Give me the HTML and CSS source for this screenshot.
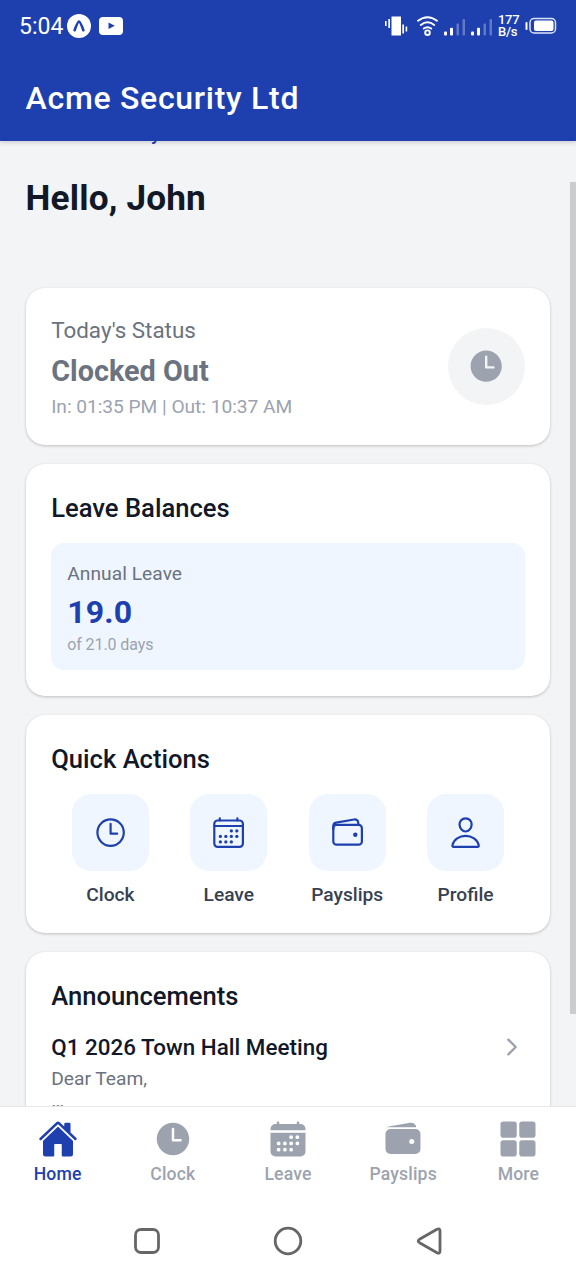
FILE: index.html
```html
<!DOCTYPE html>
<html lang="en">
<head>
<meta charset="utf-8">
<title>Acme Security Ltd</title>
<link rel="stylesheet" href="styles.css">
</head>
<body>
<svg class="defs" aria-hidden="true">
  <symbol id="time-outline" viewBox="0 0 512 512"><path class="line" d="M256 64C150 64 64 150 64 256s86 192 192 192 192-86 192-192S362 64 256 64z"/><path class="line" d="M256 128v144h96"/></symbol>
  <symbol id="time" viewBox="0 0 512 512"><path d="M256 48C141.13 48 48 141.13 48 256s93.13 208 208 208 208-93.13 208-208S370.87 48 256 48zm96 240h-96a16 16 0 01-16-16V128a16 16 0 0132 0v128h80a16 16 0 010 32z"/></symbol>
  <symbol id="calendar-outline" viewBox="0 0 512 512"><rect class="line" x="48" y="80" width="416" height="384" rx="48"/><path class="line" d="M128 48v32M384 48v32M464 160H48"/><circle cx="296" cy="232" r="24"/><circle cx="376" cy="232" r="24"/><circle cx="136" cy="312" r="24"/><circle cx="216" cy="312" r="24"/><circle cx="296" cy="312" r="24"/><circle cx="376" cy="312" r="24"/><circle cx="136" cy="392" r="24"/><circle cx="216" cy="392" r="24"/><circle cx="296" cy="392" r="24"/></symbol>
  <symbol id="calendar" viewBox="0 0 512 512"><path d="M480 128a64 64 0 00-64-64h-16V48.45c0-8.61-6.62-16-15.23-16.43A16 16 0 00368 48v16H144V48.45c0-8.61-6.62-16-15.23-16.43A16 16 0 00112 48v16H96a64 64 0 00-64 64v12a4 4 0 004 4h440a4 4 0 004-4zM32 416a64 64 0 0064 64h320a64 64 0 0064-64V179a3 3 0 00-3-3H35a3 3 0 00-3 3z"/><g fill="#fff"><circle cx="296" cy="232" r="24"/><circle cx="376" cy="232" r="24"/><circle cx="136" cy="312" r="24"/><circle cx="216" cy="312" r="24"/><circle cx="296" cy="312" r="24"/><circle cx="376" cy="312" r="24"/><circle cx="136" cy="392" r="24"/><circle cx="216" cy="392" r="24"/><circle cx="296" cy="392" r="24"/></g></symbol>
  <symbol id="wallet-outline" viewBox="0 0 512 512"><rect class="line" x="48" y="144" width="416" height="288" rx="48"/><path class="line" d="M411.36 144v-30A50 50 0 00352 64.9L88.64 109.85A50 50 0 0048 159v49"/><circle cx="368" cy="288" r="32"/></symbol>
  <symbol id="wallet" viewBox="0 0 512 512"><path d="M95.5 104h320a87.73 87.73 0 0111.18.71 66 66 0 00-77.51-55.56L86 94.08h-.3a66 66 0 00-41.07 26.13A87.57 87.57 0 0195.5 104zM415.5 128h-320a64.07 64.07 0 00-64 64v192a64.07 64.07 0 0064 64h320a64.07 64.07 0 0064-64V192a64.07 64.07 0 00-64-64zM368 320a32 32 0 1132-32 32 32 0 01-32 32z"/></symbol>
  <symbol id="person-outline" viewBox="0 0 512 512"><path class="line" d="M344 144c-3.92 52.87-44 96-88 96s-84.15-43.12-88-96c-4-55 35-96 88-96s92 42 88 96z"/><path class="line" d="M256 304c-87 0-175.3 48-191.64 138.6C62.39 453.52 68.57 464 80 464h352c11.44 0 17.62-10.48 15.65-21.4C431.3 352 343 304 256 304z"/></symbol>
  <symbol id="home" viewBox="0 0 512 512"><path d="M261.56 101.28a8 8 0 00-11.06 0L66.4 277.15a8 8 0 00-2.47 5.79L63.9 448a32 32 0 0032 32H192a16 16 0 0016-16V328a8 8 0 018-8h80a8 8 0 018 8v136a16 16 0 0016 16h96.06a32 32 0 0032-32V282.94a8 8 0 00-2.47-5.79z"/><path d="M490.91 244.15l-74.8-71.56V64a16 16 0 00-16-16h-48a16 16 0 00-16 16v32l-57.92-55.38C272.77 35.14 264.71 32 256 32c-8.68 0-16.72 3.14-22.14 8.63l-212.7 203.5c-6.22 6-7 15.87-1.34 22.37A16 16 0 0043 267.56L250.5 69.28a8 8 0 0111.06 0l207.52 198.28a16 16 0 0022.59-.44c6.14-6.36 5.63-16.86-.76-22.97z"/></symbol>
  <symbol id="grid" viewBox="0 0 512 512"><rect x="32" y="32" width="208" height="208" rx="36"/><rect x="272" y="32" width="208" height="208" rx="36"/><rect x="32" y="272" width="208" height="208" rx="36"/><rect x="272" y="272" width="208" height="208" rx="36"/></symbol>
</svg>

<header class="header">
  <div class="status-bar">
    <div class="status-left">
      <span class="time">5:04</span>
      <svg width="24" height="24" viewBox="0 0 24 24"><circle cx="12" cy="12" r="12" fill="#fff"/><path d="M7.6 16.2Q10.800 7.500 12 7.500T16.400 16.200" fill="none" stroke="#1e40af" stroke-width="2.600" stroke-linecap="round" stroke-linejoin="round"/></svg>
      <svg class="video" width="24" height="18" viewBox="0 0 24 18"><rect width="24" height="18" rx="4" fill="#fff"/><path d="M9.500 5.500l6.300 3.300-6.300 3.300z" fill="#1e40af"/></svg>
    </div>
    <svg class="status-icons" width="112" height="24" viewBox="0 0 112 24" fill="#fff">
      <rect x="6.500" y="2.500" width="9.500" height="19"/><rect x="3.300" y="5" width="1.700" height="9"/><rect x="0" y="7" width="1.600" height="5"/><rect x="17.300" y="10.500" width="1.700" height="9"/><rect x="20.600" y="12.500" width="1.600" height="5"/>
      <g fill="none" stroke="#fff" stroke-width="1.900" stroke-linecap="round"><path d="M33 6.800q9.500-7.200 19 0M35.800 11q6.700-5.400 13.400 0M38.800 14.600q3.700-2.800 7.400 0"/><circle cx="42.500" cy="18.700" r="2.300"/></g>
      <rect x="59" y="17.500" width="3" height="4" rx="1"/><rect x="65" y="13.800" width="3" height="7.700" rx="1"/>
      <rect x="86" y="17.500" width="3" height="4" rx="1"/><rect x="92" y="13.800" width="3" height="7.700" rx="1"/>
      <g fill="#6378c7"><rect x="71.500" y="9.500" width="2.500" height="12" rx="1"/><rect x="77.500" y="5" width="2.500" height="16.500" rx="1"/><rect x="98.500" y="9.500" width="2.500" height="12" rx="1"/><rect x="104.500" y="5" width="2.500" height="16.500" rx="1"/></g>
    </svg>
    <div class="speed"><span>177</span><span>B/s</span></div>
    <svg width="32" height="18" viewBox="0 0 32 18"><path d="M1.500 6v6" stroke="#fff" stroke-width="2" stroke-linecap="round"/><rect x="5" y="1.500" width="25.500" height="14.500" rx="4" fill="none" stroke="#dbe2f8" stroke-width="1.500"/><rect x="9" y="3.500" width="19.500" height="10.500" rx="2" fill="#fff"/></svg>
  </div>
  <h1 class="title">Acme Security Ltd</h1>
</header>

<main class="content">
  <p class="company">Acme Security Ltd</p>
  <h2 class="greeting">Hello, John</h2>

  <section class="card status-card">
    <div>
      <p class="status-label">Today's Status</p>
      <p class="status-value">Clocked Out</p>
      <p class="status-times">In: 01:35 PM | Out: 10:37 AM</p>
    </div>
    <div class="status-badge"><svg class="icon-24"><use href="#time"/></svg></div>
  </section>

  <section class="card balances">
    <h3 class="card-title">Leave Balances</h3>
    <div class="balance">
      <p class="balance-name">Annual Leave</p>
      <p class="balance-value">19.0</p>
      <p class="balance-total">of 21.0 days</p>
    </div>
  </section>

  <section class="card quick">
    <h3 class="card-title">Quick Actions</h3>
    <div class="actions">
      <div class="action"><div class="tile"><svg class="icon-22"><use href="#time-outline"/></svg></div><span>Clock</span></div>
      <div class="action"><div class="tile"><svg class="icon-22"><use href="#calendar-outline"/></svg></div><span>Leave</span></div>
      <div class="action"><div class="tile"><svg class="icon-22"><use href="#wallet-outline"/></svg></div><span>Payslips</span></div>
      <div class="action"><div class="tile"><svg class="icon-22"><use href="#person-outline"/></svg></div><span>Profile</span></div>
    </div>
  </section>

  <section class="card news">
    <h3 class="card-title">Announcements</h3>
    <div class="news-item">
      <div>
        <p class="news-title">Q1 2026 Town Hall Meeting</p>
        <p class="news-body">Dear Team,<br>…</p>
      </div>
      <svg class="chevron" width="26" height="26" viewBox="0 0 512 512"><path d="M184 112l144 144-144 144"/></svg>
    </div>
  </section>
  <div class="scrollbar"></div>
</main>

<nav class="tabs">
  <div class="tab active"><svg class="icon-25"><use href="#home"/></svg><span>Home</span></div>
  <div class="tab"><svg class="icon-25"><use href="#time"/></svg><span>Clock</span></div>
  <div class="tab"><svg class="icon-25"><use href="#calendar"/></svg><span>Leave</span></div>
  <div class="tab"><svg class="icon-25"><use href="#wallet"/></svg><span>Payslips</span></div>
  <div class="tab"><svg class="icon-25"><use href="#grid"/></svg><span>More</span></div>
</nav>
<div class="system-nav">
  <svg width="32" height="32" viewBox="0 0 32 32"><rect x="4.500" y="4.500" width="23" height="23" rx="5.500"/></svg>
  <svg width="32" height="32" viewBox="0 0 32 32"><circle cx="16" cy="16" r="12.800"/></svg>
  <svg width="32" height="32" viewBox="-1 0 32 32"><path d="M5.500 14.300L23 4.300q3-1.300 3 1.700v20q0 3-3 1.700L5.500 17.700q-2.500-1.700 0-3.400z"/></svg>
</div>
</body>
</html>
```
FILE: styles.css
```css
* { box-sizing: border-box; }
body {
  margin: 0;
  width: 576px;
  height: 1280px;
  overflow: hidden;
  display: flex;
  flex-direction: column;
  background: #fff;
  font-family: Roboto, sans-serif;
  color: #111827;
}
h1, h2, h3, p { margin: 0; }
.defs { position: absolute; width: 0; height: 0; }
svg { display: block; flex: none; fill: currentColor; }
.line { fill: none; stroke: currentColor; stroke-width: 32; stroke-linecap: round; stroke-linejoin: round; }

.header {
  flex: none;
  height: 141px;
  background: #1e40af;
  color: #fff;
  z-index: 1;
  box-shadow: 0 1px 5px rgba(0, 0, 0, .2);
}
.status-bar { display: flex; align-items: center; height: 52px; padding: 0 19px 0 19px; }
.status-left { display: flex; align-items: center; gap: 4px; margin-right: auto; }
.time { font-size: 23px; line-height: 28px; padding-top: 2px; }
.video { margin-left: 4px; }
.status-icons { margin-right: 1px; }
.speed { display: flex; flex-direction: column; width: 23px; margin-right: 4px; font-size: 13px; line-height: 12.500px; font-weight: 500; letter-spacing: -.3px; }
.title { padding-left: 25.600px; font-size: 32px; line-height: 38px; margin-top: 27px; font-weight: 500; letter-spacing: .7px; }

.content {
  position: relative;
  flex: 1;
  min-height: 0;
  overflow: hidden;
  padding: 0 25.600px;
  background: #f3f4f6;
  display: flex;
  flex-direction: column;
}
.company { flex: none; height: 24px; margin-top: -19px; color: #1e40af; font-size: 19.200px; line-height: 24px; font-weight: 500; letter-spacing: .85px; }
.greeting { flex: none; margin: 31px 0 69px; font-size: 35.200px; line-height: 42px; font-weight: 700; letter-spacing: .15px; }
.card {
  flex: none;
  margin-bottom: 19px;
  padding: 0 25.600px;
  border-radius: 19.200px;
  background: #fff;
  box-shadow: 0 1px 3px rgba(0, 0, 0, .22);
}
.card-title { font-size: 25.600px; line-height: 30px; font-weight: 500; }
.status-card { display: flex; justify-content: space-between; align-items: center; height: 157px; }
.status-label { padding-top: 4px; font-size: 22.400px; line-height: 27px; color: #6b7280; }
.status-value { margin: 9px 0 5px; font-size: 28.800px; line-height: 36px; font-weight: 700; color: #6b7280; }
.status-times { font-size: 19.200px; line-height: 26px; color: #9ca3af; letter-spacing: -.04px; }
.status-badge { display: flex; align-items: center; justify-content: center; width: 76.800px; height: 76.800px; border-radius: 50%; background: #f3f4f6; color: #9ca3af; }
.icon-22 { width: 35.200px; height: 35.200px; }
.icon-24 { width: 38.400px; height: 38.400px; }
.icon-25 { width: 40px; height: 40px; }

.balances { height: 232px; padding-top: 29px; }
.balance { height: 127px; margin-top: 20px; padding: 19px 16px; border-radius: 12.800px; background: #eff6ff; }
.balance-name { font-size: 19.200px; line-height: 24px; color: #6b7280; letter-spacing: .05px; }
.balance-value { margin: 7px 0 4px; font-size: 32px; line-height: 38px; font-weight: 700; color: #1e40af; letter-spacing: .15px; }
.balance-total { font-size: 16px; line-height: 20px; color: #9ca3af; letter-spacing: -.08px; }

.quick { height: 218px; padding-top: 29px; }
.actions { display: flex; margin-top: 20px; }
.action { flex: 1; display: flex; flex-direction: column; align-items: center; gap: 12px; font-size: 19.200px; line-height: 24px; font-weight: 500; color: #374151; }
.tile { display: flex; align-items: center; justify-content: center; width: 76.800px; height: 76.800px; border-radius: 19.200px; background: #eff6ff; color: #1e40af; }

.news { height: 260px; padding-top: 29px; }
.news-item { display: flex; justify-content: space-between; align-items: center; margin-top: 22px; }
.news-title { font-size: 22.400px; line-height: 28px; font-weight: 500; letter-spacing: .03px; }
.news-body { margin-top: 7px; font-size: 19.200px; line-height: 22px; color: #6b7280; }
.chevron { align-self: flex-start; margin-top: .5px; }
.chevron path { fill: none; stroke: #9ca3af; stroke-width: 48; stroke-linecap: round; stroke-linejoin: round; }
.scrollbar { position: absolute; right: 0; top: 41px; width: 6px; height: 832px; background: #cbccce; }

.tabs { flex: none; display: flex; height: 96px; padding-top: 11.500px; border-top: 1px solid #e5e7eb; background: #fff; z-index: 1; }
.tab { flex: 1; display: flex; flex-direction: column; align-items: center; gap: 4.500px; color: #9ca3af; font-size: 17.600px; line-height: 22px; font-weight: 500; letter-spacing: .15px; }
.tab.active { color: #1e40af; }
.system-nav { flex: none; display: flex; justify-content: space-between; align-items: center; height: 78px; padding: 0 131px; background: #fff; }
.system-nav svg { fill: none; stroke: #666; stroke-width: 2.800; stroke-linejoin: round; }
```
